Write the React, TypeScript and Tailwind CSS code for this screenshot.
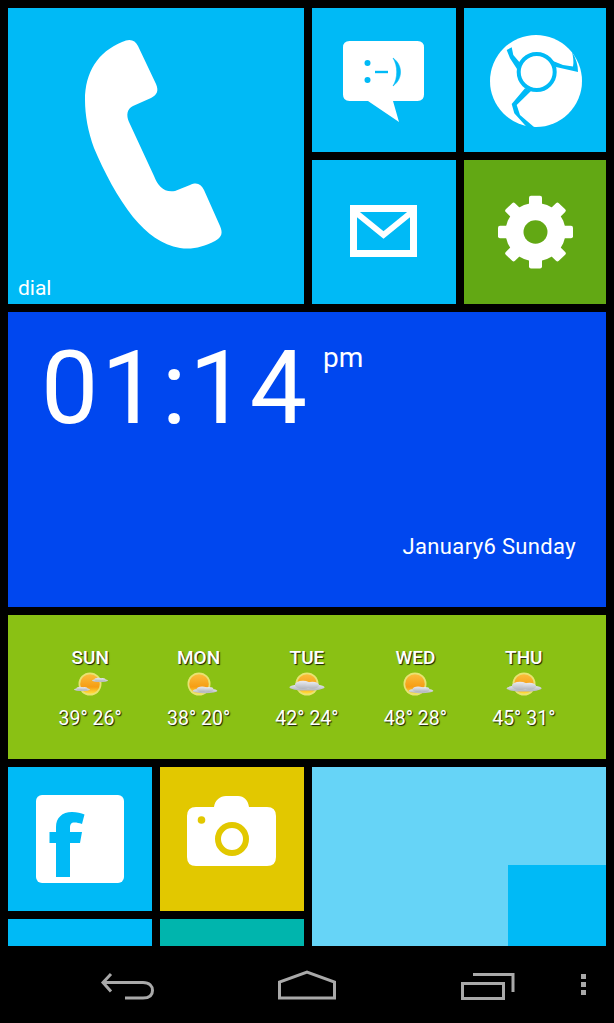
import type { ReactNode } from 'react';

const forecast = [
  { day: 'SUN', temps: '39° 26°', clouds: [{ x: 10, y: -4, s: 0.62 }, { x: -8, y: 5, s: 0.62 }] },
  { day: 'MON', temps: '38° 20°', clouds: [{ x: 6, y: 6, s: 0.95 }] },
  { day: 'TUE', temps: '42° 24°', clouds: [{ x: 0, y: 2, s: 1.35 }] },
  { day: 'WED', temps: '48° 28°', clouds: [{ x: 6, y: 6, s: 0.95 }] },
  { day: 'THU', temps: '45° 31°', clouds: [{ x: 0, y: 3, s: 1.35 }] },
];

function TileIcon({ box, children }: { box: string; children: ReactNode }) {
  return (
    <svg viewBox={box} className="h-full w-full">
      {children}
    </svg>
  );
}

function PhoneIcon() {
  return (
    <TileIcon box="8 8 296 296">
      <path
        fill="#fff"
        d="M122 42 C130 38 135 40 138 46 L156 84 C159 91 157 95 151 98 L133 106 C127 109 126 115 129 122 L154 176 C158 186 164 193 175 191 L190 185 C197 182 201 184 204 190 L220 226 C223 233 222 237 215 241 C203 247 192 250 180 248 C162 245 147 234 133 217 C118 198 104 172 94 148 C88 132 85 115 85 100 C85 72 98 52 122 42 Z"
      />
    </TileIcon>
  );
}

function MessageIcon() {
  return (
    <TileIcon box="312 8 144 144">
      <path
        fill="#fff"
        d="M349.500 41 H417.500 Q424 41 424 47.500 V94.500 Q424 101 417.500 101 H393 L399 122 L368 101 H349.500 Q343 101 343 94.500 V47.500 Q343 41 349.500 41 Z"
      />
      <circle cx="367.500" cy="63" r="3" fill="#00baf6" />
      <circle cx="367.500" cy="80" r="3" fill="#00baf6" />
      <path d="M375 72 H388" stroke="#00baf6" strokeWidth="2.400" fill="none" />
      <path d="M393 58 C403 65 403 79 393 86 C398 78 398 66 393 58 Z" fill="#00baf6" stroke="#00baf6" strokeWidth="0.600" />
    </TileIcon>
  );
}

function ChromeIcon() {
  return (
    <TileIcon box="464 8 142 144">
      <circle cx="536" cy="81" r="46" fill="#fff" />
      <g fill="#00baf6">
        <path d="M506.700 50 L511.700 47.300 L513.300 55 L521 64 L517 69 L510 58.300 Z" />
        <path d="M548 59 L563 65 L573 66.500 C574 62 573 56 572 52 C576 58 578 65 578 72 L556 67 Z" />
        <path d="M525 88.300 L511.700 104 L514.300 113.300 L526.700 127 L534 127 L520 115 L516.700 105 L531 91 Z" />
      </g>
      <circle cx="536.700" cy="72" r="18" fill="#fff" stroke="#00baf6" strokeWidth="4" />
    </TileIcon>
  );
}

function MailIcon() {
  return (
    <TileIcon box="312 160 144 144">
      <g fill="none" stroke="#fff" strokeWidth="7">
        <rect x="353.500" y="208.500" width="60" height="45" />
        <path d="M354 211 L383.500 235 L413 211" strokeWidth="6" />
      </g>
    </TileIcon>
  );
}

function GearIcon() {
  const angles = [0, 45, 90, 135, 180, 225, 270, 315];
  return (
    <TileIcon box="464 160 142 144">
      <g transform="translate(535.500 232) scale(1 0.97)">
        <circle r="30" fill="#fff" />
        {angles.map((a) => (
          <rect key={a} x="-6.500" y="-37.500" width="13" height="14" rx="2" fill="#fff" transform={`rotate(${a})`} />
        ))}
        <circle r="12" fill="#62a814" />
      </g>
    </TileIcon>
  );
}

function FacebookIcon() {
  return (
    <TileIcon box="8 767 144 144">
      <rect x="36" y="795" width="88" height="88" rx="6" fill="#fff" />
      <path
        fill="#00baf6"
        d="M56 877 V843 H49.500 V832 H56 V827 C56 818 62 812 72 812 C77 812 81 813 84.500 814.500 L82 824 C79 823 77 822.500 74.500 822.500 C71 822.500 70 824.500 70 828 V832 H82 L80 843 H70 V877 Z"
      />
    </TileIcon>
  );
}

function CameraIcon() {
  return (
    <TileIcon box="160 767 144 144">
      <path
        fill="#fff"
        d="M196 807 H214 C215 800 220 796 226 796 H238 C244 796 248 800 249 807 H267 Q276 807 276 816 V857 Q276 866 267 866 H196 Q187 866 187 857 V816 Q187 807 196 807 Z"
      />
      <circle cx="201.500" cy="820" r="3.800" fill="#e2c800" />
      <circle cx="232" cy="839" r="14" fill="#fff" stroke="#e2c800" strokeWidth="6" />
    </TileIcon>
  );
}

function WeatherIcon({ clouds }: { clouds: { x: number; y: number; s: number }[] }) {
  return (
    <svg viewBox="-20 -16 40 32" className="h-8 w-10">
      <defs>
        <linearGradient id="sun" x1="0" y1="0" x2="0" y2="1">
          <stop offset="0" stopColor="#fbbd3c" />
          <stop offset="0.65" stopColor="#f69d14" />
          <stop offset="1" stopColor="#ffe23f" />
        </linearGradient>
        <linearGradient id="cloud" x1="0" y1="0" x2="0" y2="1">
          <stop offset="0" stopColor="#e9ebf0" />
          <stop offset="1" stopColor="#b2b5bb" />
        </linearGradient>
      </defs>
      <circle r="11.500" fill="#ffeb8a" opacity="0.8" />
      <circle r="9.800" fill="url(#sun)" />
      {clouds.map((c, i) => (
        <g key={i} transform={`translate(${c.x} ${c.y}) scale(${c.s})`} fill="url(#cloud)">
          <ellipse cx="0" cy="1" rx="13" ry="2.400" />
          <ellipse cx="-3" cy="-0.800" rx="6" ry="3" />
          <ellipse cx="4" cy="-0.500" rx="5" ry="2.600" />
        </g>
      ))}
    </svg>
  );
}

function NavIcons() {
  return (
    <div className="flex h-[77px] items-center bg-black pl-[37px]">
      <div className="flex w-[180px] justify-center">
        <svg viewBox="100 946 54 77" className="h-[77px] w-[54px]" fill="none" stroke="#a9a9a9" strokeWidth="3">
          <path d="M111 974 L103 982.500 L111 991.500" />
          <path d="M104 982.500 H143 C149.500 982.500 152.500 986 152.500 990.500 C152.500 995 149.500 998 143 998 H125" />
        </svg>
      </div>
      <div className="flex w-[180px] justify-center">
        <svg viewBox="277 946 60 77" className="h-[77px] w-[60px]" fill="none" stroke="#a9a9a9" strokeWidth="3">
          <path d="M279.500 998 V982 L307 972 L334.500 982 V998 Z" />
        </svg>
      </div>
      <div className="flex w-[180px] justify-center">
        <svg viewBox="459 946 56 77" className="h-[77px] w-[56px]" fill="none" stroke="#a9a9a9" strokeWidth="3">
          <rect x="462.500" y="983.500" width="41" height="15" />
          <path d="M473 974.500 H513 V992" />
        </svg>
      </div>
      <div className="ml-[4px] flex w-[5px] flex-col gap-[3px]">
        <span className="h-[5px] w-[5px] bg-[#a9a9a9]" />
        <span className="h-[5px] w-[5px] bg-[#a9a9a9]" />
        <span className="h-[5px] w-[5px] bg-[#a9a9a9]" />
      </div>
    </div>
  );
}

export default function App() {
  return (
    <div className="flex h-[1023px] w-[614px] flex-col overflow-hidden bg-black font-['Roboto',sans-serif] text-white">
      <div className="h-[946px] overflow-hidden">
        <div className="grid grid-cols-[144px_144px_144px_142px] grid-rows-[144px_144px_143px_144px_144px_144px_144px] gap-2 p-2">
          <div className="relative col-span-2 row-span-2 bg-[#00baf6]">
            <PhoneIcon />
            <span className="absolute bottom-[4px] left-[10px] text-[21px] leading-6">dial</span>
          </div>
          <div className="bg-[#00baf6]">
            <MessageIcon />
          </div>
          <div className="bg-[#00baf6]">
            <ChromeIcon />
          </div>
          <div className="bg-[#00baf6]">
            <MailIcon />
          </div>
          <div className="bg-[#62a814]">
            <GearIcon />
          </div>

          <div className="col-span-4 row-span-2 flex flex-col justify-between bg-[#0047ef] pb-[46px] pl-[33px] pr-[30px] pt-[16px]">
            <div className="flex items-start">
              <span className="text-[102px] leading-[120px] tracking-[3px]">01:14</span>
              <span className="ml-[13px] mt-[14px] text-[28px] leading-8">pm</span>
            </div>
            <div className="text-right text-[22px] leading-7 tracking-[0.35px]">January6 Sunday</div>
          </div>

          <div className="col-span-4 grid grid-cols-5 content-start bg-[#8ac114] px-[28px] pt-[31px] [text-shadow:1px_1px_1px_rgba(0,0,0,0.85)]">
            {forecast.map((f) => (
              <div key={f.day} className="flex flex-col items-center">
                <span className="text-[19px] font-medium leading-[24px]">{f.day}</span>
                <div className="-mt-[2px]">
                  <WeatherIcon clouds={f.clouds} />
                </div>
                <span className="mt-[7px] text-[19.5px] leading-[24px]">{f.temps}</span>
              </div>
            ))}
          </div>

          <div className="bg-[#00baf6]">
            <FacebookIcon />
          </div>
          <div className="bg-[#e2c800]">
            <CameraIcon />
          </div>
          <div className="relative col-span-2 row-span-2 bg-[#66d4f7]">
            <div className="absolute left-[196px] top-[98px] h-[98px] w-[98px] bg-[#00baf6]" />
          </div>
          <div className="bg-[#00baf6]" />
          <div className="bg-[#00b5ad]" />
        </div>
      </div>
      <NavIcons />
    </div>
  );
}
